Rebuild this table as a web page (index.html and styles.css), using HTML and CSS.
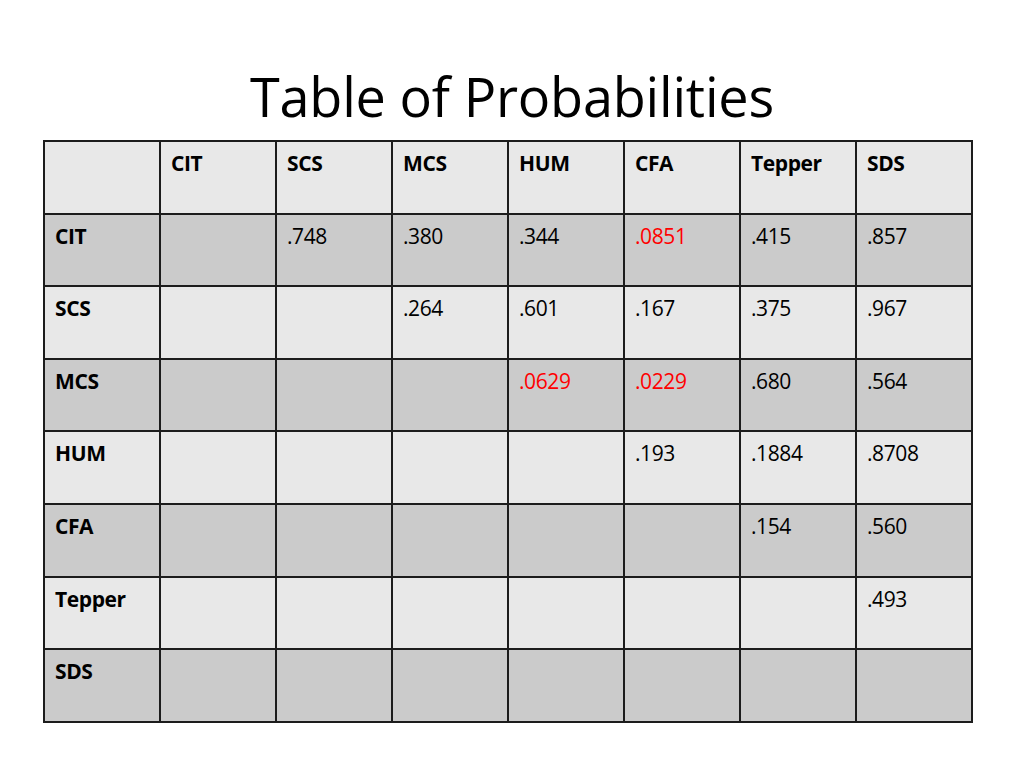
FILE: index.html
```html
<!DOCTYPE html>
<html>
<head>
<meta charset="utf-8">
<link rel="stylesheet" href="styles.css">
</head>
<body>
<div class="slide">
  <h1 class="title">Table of Probabilities</h1>
  <table class="prob">
    <tr class="light"><td></td><th>CIT</th><th>SCS</th><th>MCS</th><th>HUM</th><th>CFA</th><th>Tepper</th><th>SDS</th></tr>
    <tr class="dark"><th>CIT</th><td></td><td>.748</td><td>.380</td><td>.344</td><td class="red">.0851</td><td>.415</td><td>.857</td></tr>
    <tr class="light"><th>SCS</th><td></td><td></td><td>.264</td><td>.601</td><td>.167</td><td>.375</td><td>.967</td></tr>
    <tr class="dark"><th>MCS</th><td></td><td></td><td></td><td class="red">.0629</td><td class="red">.0229</td><td>.680</td><td>.564</td></tr>
    <tr class="light"><th>HUM</th><td></td><td></td><td></td><td></td><td>.193</td><td>.1884</td><td>.8708</td></tr>
    <tr class="dark"><th>CFA</th><td></td><td></td><td></td><td></td><td></td><td>.154</td><td>.560</td></tr>
    <tr class="light"><th>Tepper</th><td></td><td></td><td></td><td></td><td></td><td></td><td>.493</td></tr>
    <tr class="dark"><th>SDS</th><td></td><td></td><td></td><td></td><td></td><td></td><td></td></tr>
  </table>
</div>
</body>
</html>
```

FILE: styles.css
```css
html, body {
  margin: 0;
  padding: 0;
  background: #ffffff;
}
.slide {
  width: 1024px;
  height: 768px;
  display: flex;
  flex-direction: column;
  align-items: center;
  font-family: "Open Sans", "Liberation Sans", sans-serif;
  color: #000;
}
.title {
  margin: 60px 0 0 0;
  height: 80px;
  font-weight: 400;
  font-size: 54px;
  line-height: 72px;
  letter-spacing: -0.2px;
  transform: translateX(0);
}
.prob {
  border-collapse: collapse;
  transform: translateX(-4px);
  table-layout: fixed;
  width: 929px;
}
.prob th, .prob td {
  width: 116px;
  height: 72.6px;
  box-sizing: border-box;
  border: 2px solid #1c1c1c;
  padding: 7px 0 0 10px;
  text-align: left;
  vertical-align: top;
  font-size: 21px;
  line-height: 28px;
  letter-spacing: -0.4px;
}
.prob th {
  font-weight: 700;
}
.prob td {
  font-weight: 400;
}
.light th, .light td {
  background: #e8e8e8;
}
.dark th, .dark td {
  background: #cbcbcb;
}
.prob td.red {
  color: #ff0000;
}
```
